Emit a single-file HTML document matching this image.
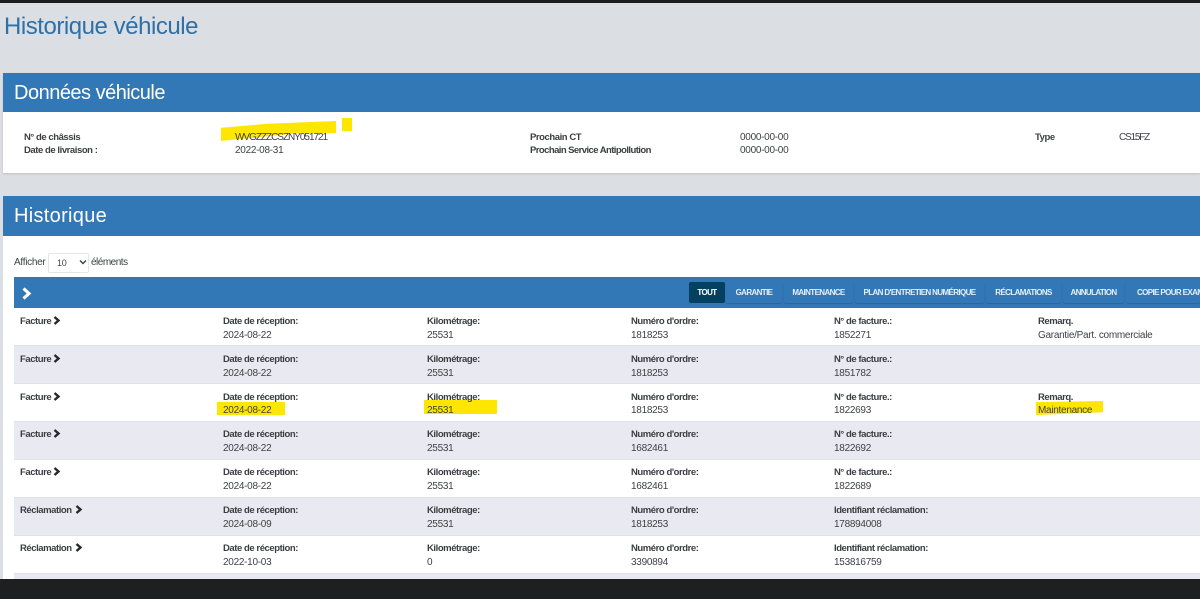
<!DOCTYPE html>
<html lang="fr"><head><meta charset="utf-8"><title>Historique véhicule</title>
<style>
html,body{margin:0;padding:0;background:#dbdee2}
body{position:relative;width:1200px;height:599px;overflow:hidden;font-family:"Liberation Sans",sans-serif;color:#3f4145;font-size:10px}
div,span.a{position:absolute}
.t{white-space:nowrap;line-height:12px;letter-spacing:-.28px;margin-top:2px}
.b{font-weight:bold;font-size:9.5px;color:#3c3e42;letter-spacing:-.44px}
.y{background:#ffe600}
.nav{top:282px;height:21px;line-height:21px;font-size:8px;font-weight:bold;color:#e6eef6;background:#3278b6;border-radius:2px;text-align:center;white-space:nowrap;letter-spacing:-.62px;box-shadow:0 1px 1px #2a659b}
.row{left:14px;width:1186px;height:37px;border-bottom:1px solid #dfe1e6}
svg[width="8"][height="9"]{margin:1px 0 0 1px}
</style></head><body>
<div style="left:0;top:0;width:1200px;height:3px;background:#1c1c1e"></div>
<div class="t" style="left:4px;top:11px;font-size:24px;line-height:28px;color:#2f70a8;letter-spacing:-.46px">Historique véhicule</div>

<div style="left:3px;top:73px;width:1197px;height:100px;background:#fff;box-shadow:0 1px 2px #bfc2c5"></div>
<div style="left:3px;top:73px;width:1197px;height:39px;background:#3278b6"></div>
<div class="t" style="left:14px;top:78px;font-size:20px;line-height:26px;color:#fff;letter-spacing:-.5px">Données véhicule</div>

<div class="y" style="left:221px;top:121px;width:115px;height:20px;clip-path:polygon(0 34%,40% 14%,100% 0,100% 60%,60% 65%,0 100%)"></div>
<div class="y" style="left:342px;top:118px;width:10px;height:13px"></div>
<div class="t b" style="left:24px;top:130px">N° de châssis</div>
<div class="t" style="left:235px;top:130px;letter-spacing:-1.02px">WVGZZZCSZNY051721</div>
<div class="t b" style="left:24px;top:143px">Date de livraison :</div>
<div class="t" style="left:235px;top:143px">2022-08-31</div>
<div class="t b" style="left:530px;top:130px">Prochain CT</div>
<div class="t" style="left:740px;top:130px">0000-00-00</div>
<div class="t b" style="left:530px;top:143px;letter-spacing:-.57px">Prochain Service Antipollution</div>
<div class="t" style="left:740px;top:143px">0000-00-00</div>
<div class="t b" style="left:1035px;top:130px">Type</div>
<div class="t" style="left:1119px;top:130px;letter-spacing:-1.2px">CS15FZ</div>

<div style="left:3px;top:196px;width:1197px;height:383px;background:#fff"></div>
<div style="left:3px;top:196px;width:1197px;height:40px;background:#3278b6"></div>
<div class="t" style="left:14px;top:201px;font-size:20px;line-height:26px;color:#fff;letter-spacing:.3px">Historique</div>

<div class="t" style="left:14px;top:255px">Afficher</div>
<div style="left:48px;top:253px;width:39px;height:18px;border:1px solid #e4e6e9;border-radius:2px;background:#fff"></div>
<div class="t" style="left:57px;top:255px;font-size:9px">10</div>
<svg style="position:absolute;left:79px;top:259px" width="8" height="6" viewBox="0 0 8 6"><path d="M1 1.5L4 4.5L7 1.5" fill="none" stroke="#3f4145" stroke-width="1.4"/></svg>
<div class="t" style="left:91px;top:255px;letter-spacing:-.5px">éléments</div>

<div style="left:14px;top:277px;width:1186px;height:31px;background:#3278b6"></div>
<svg style="position:absolute;left:21px;top:287px" width="11" height="13" viewBox="0 0 11 13"><path d="M2.5 1.5L8 6.5L2.5 11.5" fill="none" stroke="#fff" stroke-width="3.2"/></svg>
<div class="nav" style="left:689px;width:36px;background:#04405f;color:#fff;box-shadow:none">TOUT</div>
<div class="nav" style="left:726px;width:56px">GARANTIE</div>
<div class="nav" style="left:784px;width:69px">MAINTENANCE</div>
<div class="nav" style="left:855px;width:129px">PLAN D'ENTRETIEN NUMÉRIQUE</div>
<div class="nav" style="left:986px;width:75px">RÉCLAMATIONS</div>
<div class="nav" style="left:1063px;width:61px">ANNULATION</div>
<div class="nav" style="left:1126px;width:74px;text-align:left;padding-left:0;text-indent:11px;overflow:hidden">COPIE POUR EXAMEN</div>

<div class="row" style="top:308px;background:#fff"></div>
<div class="row" style="top:346px;background:#e9eaf1"></div>
<div class="row" style="top:384px;background:#fff"></div>
<div class="row" style="top:422px;background:#e9eaf1"></div>
<div class="row" style="top:460px;background:#fff"></div>
<div class="row" style="top:498px;background:#e9eaf1"></div>
<div class="row" style="top:536px;background:#fff"></div>
<div style="left:14px;top:574px;width:1186px;height:5px;background:#e9eaf1"></div>

<div class="y" style="left:217px;top:402px;width:68px;height:13px"></div>
<div class="y" style="left:424px;top:400px;width:73px;height:14px"></div>
<div class="y" style="left:1036px;top:401px;width:67px;height:14px;clip-path:polygon(0 8%,100% 0,100% 80%,0 100%)"></div>

<svg width="0" height="0" style="position:absolute"><defs><path id="c" d="M1.5 1L5.5 4.5L1.5 8" fill="none" stroke="#26282b" stroke-width="2.4"/></defs></svg>

<!-- Row 1 -->
<div class="t b" style="left:20px;top:314px">Facture</div><svg style="position:absolute;left:52px;top:315px" width="8" height="9"><use href="#c"/></svg>
<div class="t b" style="left:223px;top:314px">Date de réception:</div><div class="t" style="left:223px;top:328px">2024-08-22</div>
<div class="t b" style="left:427px;top:314px">Kilométrage:</div><div class="t" style="left:427px;top:328px">25531</div>
<div class="t b" style="left:631px;top:314px">Numéro d'ordre:</div><div class="t" style="left:631px;top:328px">1818253</div>
<div class="t b" style="left:834px;top:314px">N° de facture.:</div><div class="t" style="left:834px;top:328px">1852271</div>
<div class="t b" style="left:1038px;top:314px">Remarq.</div><div class="t" style="left:1038px;top:328px">Garantie/Part. commerciale</div>
<!-- Row 2 -->
<div class="t b" style="left:20px;top:352px">Facture</div><svg style="position:absolute;left:52px;top:353px" width="8" height="9"><use href="#c"/></svg>
<div class="t b" style="left:223px;top:352px">Date de réception:</div><div class="t" style="left:223px;top:366px">2024-08-22</div>
<div class="t b" style="left:427px;top:352px">Kilométrage:</div><div class="t" style="left:427px;top:366px">25531</div>
<div class="t b" style="left:631px;top:352px">Numéro d'ordre:</div><div class="t" style="left:631px;top:366px">1818253</div>
<div class="t b" style="left:834px;top:352px">N° de facture.:</div><div class="t" style="left:834px;top:366px">1851782</div>
<!-- Row 3 -->
<div class="t b" style="left:20px;top:390px">Facture</div><svg style="position:absolute;left:52px;top:391px" width="8" height="9"><use href="#c"/></svg>
<div class="t b" style="left:223px;top:390px">Date de réception:</div><div class="t" style="left:223px;top:403px">2024-08-22</div>
<div class="t b" style="left:427px;top:390px">Kilométrage:</div><div class="t" style="left:427px;top:403px">25531</div>
<div class="t b" style="left:631px;top:390px">Numéro d'ordre:</div><div class="t" style="left:631px;top:403px">1818253</div>
<div class="t b" style="left:834px;top:390px">N° de facture.:</div><div class="t" style="left:834px;top:403px">1822693</div>
<div class="t b" style="left:1038px;top:390px">Remarq.</div><div class="t" style="left:1038px;top:403px">Maintenance</div>
<!-- Row 4 -->
<div class="t b" style="left:20px;top:427px">Facture</div><svg style="position:absolute;left:52px;top:428px" width="8" height="9"><use href="#c"/></svg>
<div class="t b" style="left:223px;top:427px">Date de réception:</div><div class="t" style="left:223px;top:441px">2024-08-22</div>
<div class="t b" style="left:427px;top:427px">Kilométrage:</div><div class="t" style="left:427px;top:441px">25531</div>
<div class="t b" style="left:631px;top:427px">Numéro d'ordre:</div><div class="t" style="left:631px;top:441px">1682461</div>
<div class="t b" style="left:834px;top:427px">N° de facture.:</div><div class="t" style="left:834px;top:441px">1822692</div>
<!-- Row 5 -->
<div class="t b" style="left:20px;top:465px">Facture</div><svg style="position:absolute;left:52px;top:466px" width="8" height="9"><use href="#c"/></svg>
<div class="t b" style="left:223px;top:465px">Date de réception:</div><div class="t" style="left:223px;top:479px">2024-08-22</div>
<div class="t b" style="left:427px;top:465px">Kilométrage:</div><div class="t" style="left:427px;top:479px">25531</div>
<div class="t b" style="left:631px;top:465px">Numéro d'ordre:</div><div class="t" style="left:631px;top:479px">1682461</div>
<div class="t b" style="left:834px;top:465px">N° de facture.:</div><div class="t" style="left:834px;top:479px">1822689</div>
<!-- Row 6 -->
<div class="t b" style="left:20px;top:503px">Réclamation</div><svg style="position:absolute;left:74px;top:504px" width="8" height="9"><use href="#c"/></svg>
<div class="t b" style="left:223px;top:503px">Date de réception:</div><div class="t" style="left:223px;top:517px">2024-08-09</div>
<div class="t b" style="left:427px;top:503px">Kilométrage:</div><div class="t" style="left:427px;top:517px">25531</div>
<div class="t b" style="left:631px;top:503px">Numéro d'ordre:</div><div class="t" style="left:631px;top:517px">1818253</div>
<div class="t b" style="left:834px;top:503px">Identifiant réclamation:</div><div class="t" style="left:834px;top:517px">178894008</div>
<!-- Row 7 -->
<div class="t b" style="left:20px;top:541px">Réclamation</div><svg style="position:absolute;left:74px;top:542px" width="8" height="9"><use href="#c"/></svg>
<div class="t b" style="left:223px;top:541px">Date de réception:</div><div class="t" style="left:223px;top:555px">2022-10-03</div>
<div class="t b" style="left:427px;top:541px">Kilométrage:</div><div class="t" style="left:427px;top:555px">0</div>
<div class="t b" style="left:631px;top:541px">Numéro d'ordre:</div><div class="t" style="left:631px;top:555px">3390894</div>
<div class="t b" style="left:834px;top:541px">Identifiant réclamation:</div><div class="t" style="left:834px;top:555px">153816759</div>

<div style="left:0;top:579px;width:1200px;height:20px;background:#1e1f21"></div>
</body></html>
